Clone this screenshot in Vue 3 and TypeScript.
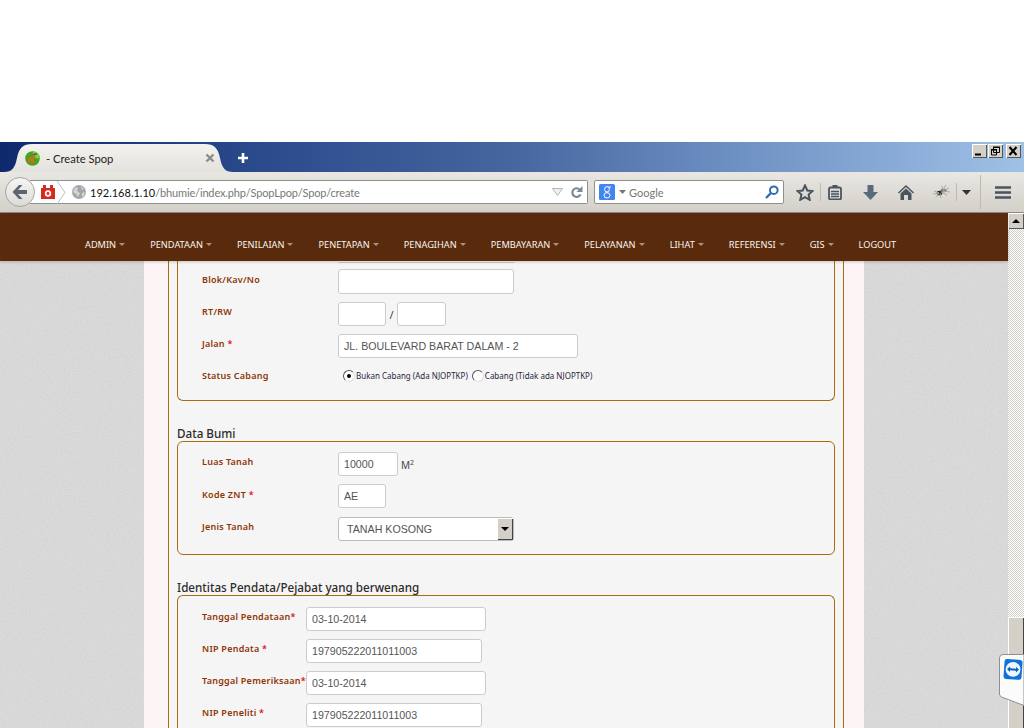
<template>
  <div class="screen">
    <div class="blank"></div>

    <div class="titlebar">
      <div class="tab">
        <svg class="favicon" width="15" height="15" viewBox="0 0 15 15">
          <circle cx="7.500" cy="7.500" r="7.300" fill="#4aa320" />
          <path d="M7.500.2a7.300 7.300 0 0 1 7.300 7.300h-3.500L8 3z" fill="#86cc34" />
          <path d="M4 11.500V8.500q0-1.500 1.300-1.500t1.300 1.500v2q0 1.300 1.200.8L9 3.500" fill="none" stroke="#dd6a18" stroke-width="1.700" />
          <path d="M8.500 3.500l3.200-.6" stroke="#2d4f9e" stroke-width="1.500" />
        </svg>
        <span class="tab-title">- Create Spop</span>
        <svg class="tab-close" width="10" height="10" viewBox="0 0 10 10">
          <path d="M1.500 1.500l7 7M8.500 1.500l-7 7" stroke="#8c8c8c" stroke-width="2.400" />
        </svg>
      </div>
      <svg class="new-tab" width="12" height="12" viewBox="0 0 12 12">
        <path d="M6 1v10M1 6h10" stroke="#fff" stroke-width="2.600" />
      </svg>
      <div class="win-controls">
        <div class="win-btn">
          <svg width="15" height="14" viewBox="0 0 15 14"><path d="M3 10.500h6" stroke="#000" stroke-width="2" /></svg>
        </div>
        <div class="win-btn">
          <svg width="15" height="14" viewBox="0 0 15 14">
            <path d="M5.500 3.500h6v5h-6zM3.500 6h5v5h-5z" fill="#d4d0c8" stroke="#000" />
            <path d="M5 3h7M3 5.500h6" stroke="#000" />
          </svg>
        </div>
        <div class="win-btn close">
          <svg width="15" height="14" viewBox="0 0 15 14"><path d="M3.500 3l7 8M10.500 3l-7 8" stroke="#000" stroke-width="2" /></svg>
        </div>
      </div>
    </div>

    <div class="toolbar">
      <div class="back-btn">
        <svg width="18" height="16" viewBox="0 0 18 16">
          <path d="M8 1L1.500 8 8 15h3.500L7 10h9V6H7l4.500-5z" fill="#5b6470" />
        </svg>
      </div>
      <div class="urlbar">
        <svg class="addon-icon" width="16" height="16" viewBox="0 0 16 16">
          <path d="M1 4h14v11H1z" fill="#d9281e" />
          <rect x="3" y="1" width="3" height="3" fill="#d9281e" />
          <rect x="10" y="1" width="3" height="3" fill="#d9281e" />
          <circle cx="8" cy="9.500" r="3.200" fill="#fff" />
          <circle cx="8" cy="9.500" r="1.400" fill="#d9281e" />
        </svg>
        <svg class="chevron" width="9" height="23" viewBox="0 0 9 23">
          <path d="M0 0l8 11.500L0 23" fill="none" stroke="#bdbdbd" />
        </svg>
        <svg class="globe" width="14" height="14" viewBox="0 0 14 14">
          <circle cx="7" cy="7" r="7" fill="#a4a7aa" />
          <path d="M3 2l3 1-1 3 3 2-2 4-2-3-3-2zM9 1l3 3-2 1zM10 8l3-1-1 4-2 1z" fill="#d2d4d6" />
        </svg>
        <span class="url"><b>192.168.1.10</b>/bhumie/index.php/SpopLpop/Spop/create</span>
        <svg class="url-drop" width="11" height="8" viewBox="0 0 11 8">
          <path d="M.5.500h10L5.500 7.500z" fill="#f0f0f0" stroke="#b4b4b4" />
        </svg>
        <svg class="reload" width="13" height="13" viewBox="0 0 13 13">
          <path d="M10.500 8.500a4.300 4.300 0 1 1-.8-5" fill="none" stroke="#7d8994" stroke-width="2.200" />
          <path d="M12.500 0v6h-6z" fill="#7d8994" />
        </svg>
      </div>
      <div class="searchbar">
        <svg class="g-icon" width="16" height="16" viewBox="0 0 16 16">
          <rect width="16" height="16" rx="1.500" fill="#4285f0" />
          <ellipse cx="8" cy="5.300" rx="2.400" ry="2.700" fill="none" stroke="#fff" />
          <ellipse cx="8" cy="11.300" rx="3" ry="2.700" fill="none" stroke="#fff" />
          <path d="M9.500 3h2.500" stroke="#fff" />
        </svg>
        <svg class="g-drop" width="7" height="4" viewBox="0 0 7 4"><path d="M0 0h7L3.500 4z" fill="#777" /></svg>
        <span class="search-text">Google</span>
        <svg class="magnifier" width="14" height="14" viewBox="0 0 14 14">
          <circle cx="8.800" cy="5.200" r="3.800" fill="none" stroke="#2f6db0" stroke-width="2" />
          <path d="M6 8l-5 5" stroke="#2f6db0" stroke-width="2.400" />
        </svg>
      </div>
      <div class="tools">
        <svg class="t-star" width="18" height="17" viewBox="0 0 18 17">
          <path d="M9 1.500l2.300 5 5.200.6-3.900 3.500 1.100 5.200L9 13.100l-4.700 2.700 1.100-5.200-3.900-3.500 5.200-.6z" fill="none" stroke="#4a5560" stroke-width="2" />
        </svg>
        <i class="t-sep s1"></i>
        <svg class="t-clip" width="14" height="15" viewBox="0 0 14 15">
          <rect x="1" y="2.500" width="12" height="12" rx="1.500" fill="none" stroke="#4a5560" stroke-width="1.800" />
          <path d="M3 6.500h8M3 9h8M3 11.500h8" stroke="#4a5560" stroke-width="1.300" />
          <rect x="4.500" y="0" width="5" height="3" fill="#4a5560" />
        </svg>
        <svg class="t-down" width="15" height="15" viewBox="0 0 15 15">
          <path d="M4.500 0h6v7H15l-7.500 8L0 7h4.500z" fill="#596a7d" />
        </svg>
        <svg class="t-home" width="16" height="15" viewBox="0 0 16 15">
          <path d="M8 0L0 7.500l1 1L8 2l7 6.500 1-1z" fill="#4a5560" />
          <path d="M2.500 8.500L8 3.500l5.500 5V15h-3.500v-5H6v5H2.500z" fill="#4a5560" />
        </svg>
        <svg class="t-bug" width="17" height="14" viewBox="0 0 17 14">
          <ellipse cx="6.500" cy="8" rx="2.800" ry="2.300" fill="#2a2a2a" />
          <ellipse cx="10.500" cy="5.500" rx="3" ry="1.800" fill="#6a6a6a" />
          <path d="M1 6l5 2M0 9l6-1M3 12l3-4M8 13l-1-5M9 1l1 4M13 0l-3 5M16 3l-6 3M17 7l-8-1M14 10l-6-3" stroke="#a8a8a8" fill="none" />
        </svg>
        <i class="t-sep s2"></i>
        <svg class="t-drop" width="9" height="5" viewBox="0 0 9 5"><path d="M0 0h9L4.500 5z" fill="#333" /></svg>
        <i class="t-sep s3"></i>
        <svg class="t-menu" width="16" height="13" viewBox="0 0 16 13">
          <path d="M0 1.500h16M0 6.500h16M0 11.500h16" stroke="#4a5560" stroke-width="2.600" />
        </svg>
      </div>
    </div>

    <div class="viewport">
      <div class="page">
        <nav class="menu">
          <a v-for="item in menuItems" :key="item" class="menu-item">
            {{ item }}<i v-if="item !== 'LOGOUT'" class="caret"></i>
          </a>
        </nav>
        <div class="page-body">
          <svg class="paper" width="1008" height="467">
            <filter id="grain">
              <feTurbulence type="fractalNoise" baseFrequency="0.7" numOctaves="3" seed="4" />
              <feColorMatrix values="0 0 0 0 0.55  0 0 0 0 0.55  0 0 0 0 0.55  0.6 0 0 0 -0.14" />
            </filter>
            <rect width="1008" height="467" filter="url(#grain)" />
          </svg>
          <div class="sheet">
            <div class="sheet-inner">
              <div class="box first">
                <div class="cut-input"></div>
                <div class="row tall">
                  <label class="lbl low">Blok/Kav/No</label>
                  <input class="inp blok" readonly />
                </div>
                <div class="row">
                  <label class="lbl">RT/RW</label>
                  <input class="inp short" readonly />
                  <span class="slash">/</span>
                  <input class="inp short" readonly />
                </div>
                <div class="row">
                  <label class="lbl">Jalan <em>*</em></label>
                  <input class="inp jalan" readonly value="JL. BOULEVARD BARAT DALAM - 2" />
                </div>
                <div class="row status">
                  <label class="lbl">Status Cabang</label>
                  <span class="radio checked"></span>
                  <span class="radio-text">Bukan Cabang (Ada NJOPTKP)</span>
                  <span class="radio second"></span>
                  <span class="radio-text">Cabang (Tidak ada NJOPTKP)</span>
                </div>
              </div>

              <h4 class="box-title">Data Bumi</h4>
              <div class="box">
                <div class="row">
                  <label class="lbl">Luas Tanah</label>
                  <input class="inp luas" readonly value="10000" />
                  <span class="unit">M<sup>2</sup></span>
                </div>
                <div class="row">
                  <label class="lbl low">Kode ZNT <em>*</em></label>
                  <input class="inp short" readonly value="AE" />
                </div>
                <div class="row">
                  <label class="lbl low">Jenis Tanah</label>
                  <div class="sel">
                    <span>TANAH KOSONG</span>
                    <i class="sel-btn"><b></b></i>
                  </div>
                </div>
              </div>

              <h4 class="box-title">Identitas Pendata/Pejabat yang berwenang</h4>
              <div class="box narrow">
                <div v-for="f in officials" :key="f.label" class="row">
                  <label class="lbl">{{ f.label }}<em>{{ f.star }}</em></label>
                  <input class="inp" :class="f.cls" readonly :value="f.value" />
                </div>
              </div>
            </div>
          </div>
        </div>
      </div>

      <div class="scrollbar">
        <div class="sb-btn"><b></b></div>
        <div class="sb-thumb"></div>
      </div>

      <div class="tv-tab">
        <svg width="25" height="52" viewBox="0 0 25 52">
          <path d="M25 .5H4Q.5.500.5 4v36q0 2 2 3L25 51.500z" fill="#fbfbfb" stroke="#8f8f8f" />
          <g transform="rotate(4 15 16)">
            <rect x="5" y="5.500" width="18" height="20" rx="2.500" fill="#0e72d8" />
            <circle cx="14" cy="15.500" r="7.400" fill="#eef6fd" />
            <path d="M8 15.500l3-2.800v1.800h6v-1.800l3 2.800-3 2.800v-1.800h-6v1.800z" fill="#0e5fb8" />
          </g>
        </svg>
      </div>
    </div>
  </div>
</template>

<script setup lang="ts">
interface Official {
  label: string
  star: string
  value: string
  cls: string
}

const menuItems: string[] = [
  'ADMIN',
  'PENDATAAN',
  'PENILAIAN',
  'PENETAPAN',
  'PENAGIHAN',
  'PEMBAYARAN',
  'PELAYANAN',
  'LIHAT',
  'REFERENSI',
  'GIS',
  'LOGOUT'
]

const officials: Official[] = [
  { label: 'Tanggal Pendataan', star: '*', value: '03-10-2014', cls: 'date' },
  { label: 'NIP Pendata ', star: '*', value: '197905222011011003', cls: 'nip' },
  { label: 'Tanggal Pemeriksaan', star: '*', value: '03-10-2014', cls: 'date' },
  { label: 'NIP Peneliti ', star: '*', value: '197905222011011003', cls: 'nip' }
]
</script>

<style>
html,
body {
  margin: 0;
  background: #fff;
}
</style>

<style scoped>
.screen {
  width: 1024px;
  height: 728px;
  overflow: hidden;
  display: flex;
  flex-direction: column;
  font-family: "Liberation Sans", Arial, sans-serif;
}

.blank {
  height: 142px;
  flex: none;
  background: #fff;
}

/* window title + tabs */
.titlebar {
  height: 30px;
  flex: none;
  display: flex;
  align-items: flex-end;
  position: relative;
  background: linear-gradient(90deg, #0f2a6c 0%, #2a4a8c 25%, #46669f 50%, #6e91c4 72%, #9fc1e6 100%);
}

.tab {
  width: 229px;
  height: 28px;
  margin-left: 4px;
  display: flex;
  align-items: center;
  background: linear-gradient(#f3f2ee, #e3e2dd);
  clip-path: path('M0 28C8 28 11 24 13 14C15 4 19 0 28 0H201C210 0 214 4 216 14C218 24 221 28 229 28Z');
}

.favicon {
  margin-left: 21px;
}

.tab-title {
  margin-left: 6px;
  font: 11.200px Lato, sans-serif;
  color: #222;
}

.tab-close {
  margin-left: auto;
  margin-right: 18px;
}

.new-tab {
  margin-left: 4px;
  margin-bottom: 8px;
}

.win-controls {
  position: absolute;
  top: 2px;
  right: 3px;
  display: flex;
  gap: 1px;
}

.win-btn {
  width: 15px;
  height: 14px;
  display: flex;
  background: #d4d0c8;
  box-shadow: inset 1px 1px 0 #fff, inset -1px -1px 0 #555;
}

.win-btn.close {
  margin-left: 2px;
}

/* nav toolbar */
.toolbar {
  height: 40px;
  flex: none;
  display: flex;
  align-items: center;
  position: relative;
  background: linear-gradient(#e9e7e2, #d3d0c9);
  border-bottom: 1px solid #8b8b8b;
}

.back-btn {
  position: absolute;
  left: 5px;
  top: 5px;
  width: 30px;
  height: 30px;
  box-sizing: border-box;
  border: 1px solid #a6a6a6;
  border-radius: 50%;
  background: linear-gradient(#f6f6f4, #dcdad5);
  display: flex;
  align-items: center;
  justify-content: center;
  z-index: 1;
}

.urlbar {
  margin-left: 30px;
  width: 558px;
  height: 24px;
  box-sizing: border-box;
  display: flex;
  align-items: center;
  background: #fff;
  border: 1px solid #8f8f8f;
  border-radius: 0 2px 2px 0;
  border-left: 0;
}

.addon-icon {
  margin-left: 10px;
}

.chevron {
  margin-left: 1px;
}

.globe {
  margin-left: 6px;
}

.url {
  margin-left: 4px;
  font: 11px Lato, sans-serif;
  letter-spacing: -0.15px;
  color: #777;
  white-space: nowrap;
}

.url b {
  font-weight: 400;
  letter-spacing: 0;
  color: #111;
}

.url-drop {
  margin-left: auto;
  margin-right: 7px;
}

.reload {
  margin-right: 4px;
}

.searchbar {
  margin-left: 6px;
  width: 190px;
  height: 24px;
  box-sizing: border-box;
  display: flex;
  align-items: center;
  background: #fff;
  border: 1px solid #8f8f8f;
  border-radius: 2px;
}

.g-icon {
  margin-left: 4px;
}

.g-drop {
  margin-left: 4px;
}

.search-text {
  margin-left: 3px;
  font: 11px Lato, sans-serif;
  color: #777;
}

.magnifier {
  margin-left: auto;
  margin-right: 4px;
}

.tools {
  flex: 1;
  height: 100%;
  display: flex;
  align-items: center;
}

.t-star {
  margin-left: 12px;
}

.t-sep {
  width: 1px;
  height: 18px;
  background: #bdbab3;
}

.t-sep.s1 {
  margin-left: 6px;
}

.t-clip {
  margin-left: 7px;
}

.t-down {
  margin-left: 21px;
}

.t-home {
  margin-left: 20px;
}

.t-bug {
  margin-left: 19px;
}

.t-sep.s2 {
  margin-left: 6px;
}

.t-drop {
  margin-left: 5px;
}

.t-sep.s3 {
  margin-left: 9px;
  height: 34px;
}

.t-menu {
  margin-left: 14px;
}

/* page */
.viewport {
  flex: 1;
  min-height: 0;
  display: flex;
  position: relative;
}

.page {
  flex: 1;
  min-width: 0;
  display: flex;
  flex-direction: column;
}

.menu {
  height: 48px;
  flex: none;
  display: flex;
  align-items: center;
  padding: 15px 0 0 85px;
  box-sizing: border-box;
  gap: 25px;
  background: #5a2a0d;
  position: relative;
  z-index: 1;
  box-shadow: 0 1px 3px rgba(0, 0, 0, 0.2);
}

.menu-item {
  font: 9.230px "Noto Sans", sans-serif;
  color: #f7f5f0;
  white-space: nowrap;
  display: flex;
  align-items: center;
}

.caret {
  margin-left: 3px;
  border-top: 3px solid #a99484;
  border-left: 3.500px solid transparent;
  border-right: 3.500px solid transparent;
}

.page-body {
  flex: 1;
  min-height: 0;
  overflow: hidden;
  position: relative;
  background: #dcdcdc;
}

.paper {
  position: absolute;
  left: 0;
  top: 0;
}

.sheet {
  position: relative;
  width: 720px;
  height: 100%;
  margin-left: 144px;
  padding: 0 20px 0 24px;
  box-sizing: border-box;
  background: #fdf5f5;
}

.sheet-inner {
  height: 100%;
  box-sizing: border-box;
  padding: 0 8px;
  background: #f5f5f5;
  border-left: 1px solid #a86c10;
  border-right: 1px solid #a86c10;
}

.box {
  box-sizing: border-box;
  border: 1px solid #a86c10;
  border-radius: 6px;
  padding: 10px 0 6px 24px;
}

.box.first {
  border-top: 0;
  border-radius: 0 0 6px 6px;
  padding-top: 0;
  padding-bottom: 2px;
}

.box.narrow {
  border-bottom: 0;
  height: 200px;
  padding-top: 11px;
}

.box.narrow .row {
  grid-template-columns: 104px auto;
}

.cut-input {
  width: 176px;
  height: 2px;
  box-sizing: border-box;
  margin: 0 0 6px 136px;
  background: #fff;
  border-bottom: 1px solid #ccc;
}

.box-title {
  margin: 26px 0 0;
  font: 500 11.660px/13px "Noto Sans", sans-serif;
  padding-bottom: 1px;
  color: #2c2c2c;
}

.row {
  display: grid;
  grid-template-columns: 136px auto;
  justify-content: start;
  align-items: start;
  height: 24px;
  margin-bottom: 8px;
}

.row.tall {
  height: 25px;
}

.row:has(.short),
.row:has(.luas),
.row.status {
  display: flex;
}

.row:has(.short) .lbl,
.row:has(.luas) .lbl,
.row.status .lbl {
  width: 136px;
  flex: none;
}

.lbl {
  font: 600 9px/20px "Noto Sans", sans-serif;
  letter-spacing: 0.25px;
  color: #8f3505;
  white-space: pre;
}

.lbl.low {
  line-height: 22px;
}

.lbl em {
  font-style: normal;
  color: #e01010;
}

.inp {
  display: block;
  height: 24px;
  box-sizing: border-box;
  padding: 0 5px;
  background: #fff;
  border: 1px solid #ccc;
  border-radius: 3px;
  outline: none;
  font: 10.670px "Liberation Sans", Arial, sans-serif;
  color: #555;
}

.blok {
  width: 176px;
  height: 25px;
}

.short {
  width: 48px;
}

.slash {
  width: 11px;
  text-align: center;
  font: 11px/26px "Noto Sans", sans-serif;
  color: #444;
}

.short + .slash + .short {
  width: 49px;
}

.jalan {
  width: 240px;
}

.luas {
  width: 60px;
}

.unit {
  margin-left: 3px;
  font: 10px/27px "Noto Sans", sans-serif;
  color: #444;
}

.unit sup {
  font-size: 7px;
  line-height: 0;
}

.date {
  width: 180px;
}

.nip {
  width: 176px;
}

.status {
  align-items: flex-start;
}

.radio {
  width: 12px;
  height: 12px;
  margin-top: 4px;
  margin-left: 5px;
  box-sizing: border-box;
  border-radius: 50%;
  background: #fff;
  border: 1px solid;
  border-color: #555 #ddd #ddd #555;
  flex: none;
  display: flex;
  align-items: center;
  justify-content: center;
}

.radio.second {
  margin-left: 4px;
}

.radio.checked::after {
  content: "";
  width: 4px;
  height: 4px;
  border-radius: 50%;
  background: #000;
}

.radio-text {
  margin-left: 1px;
  font: 8px/20px "Noto Sans", sans-serif;
  color: #2a2440;
  white-space: nowrap;
}

.sel {
  width: 176px;
  height: 24px;
  margin-top: 1px;
  box-sizing: border-box;
  display: flex;
  align-items: center;
  justify-content: space-between;
  padding-left: 8px;
  background: #fff;
  border: 1px solid #bbb;
  border-radius: 3px;
  font: 10.670px "Liberation Sans", Arial, sans-serif;
  color: #555;
}

.sel-btn {
  width: 16px;
  height: 22px;
  flex: none;
  display: flex;
  align-items: center;
  justify-content: center;
  background: #d4d0c8;
  box-shadow: inset 1px 1px 0 #fff, inset -1px -1px 0 #444;
}

.sel-btn b {
  border-top: 4px solid #000;
  border-left: 4px solid transparent;
  border-right: 4px solid transparent;
}

/* scrollbar */
.scrollbar {
  width: 16px;
  flex: none;
  display: flex;
  flex-direction: column;
  background: repeating-conic-gradient(#d4d0c8 0 25%, #fff 0 50%) 0 0 / 2px 2px;
}

.sb-btn {
  height: 16px;
  display: flex;
  align-items: center;
  justify-content: center;
  background: #d4d0c8;
  box-shadow: inset 1px 1px 0 #fff, inset -1px -1px 0 #555;
}

.sb-btn b {
  border-bottom: 4px solid #000;
  border-left: 4px solid transparent;
  border-right: 4px solid transparent;
}

.sb-thumb {
  height: 111px;
  margin-top: auto;
  background: #d4d0c8;
  box-shadow: inset 1px 1px 0 #fff, inset -1px 0 0 #444;
}

.tv-tab {
  position: absolute;
  right: 0;
  top: 441px;
  width: 25px;
  height: 52px;
}
</style>
